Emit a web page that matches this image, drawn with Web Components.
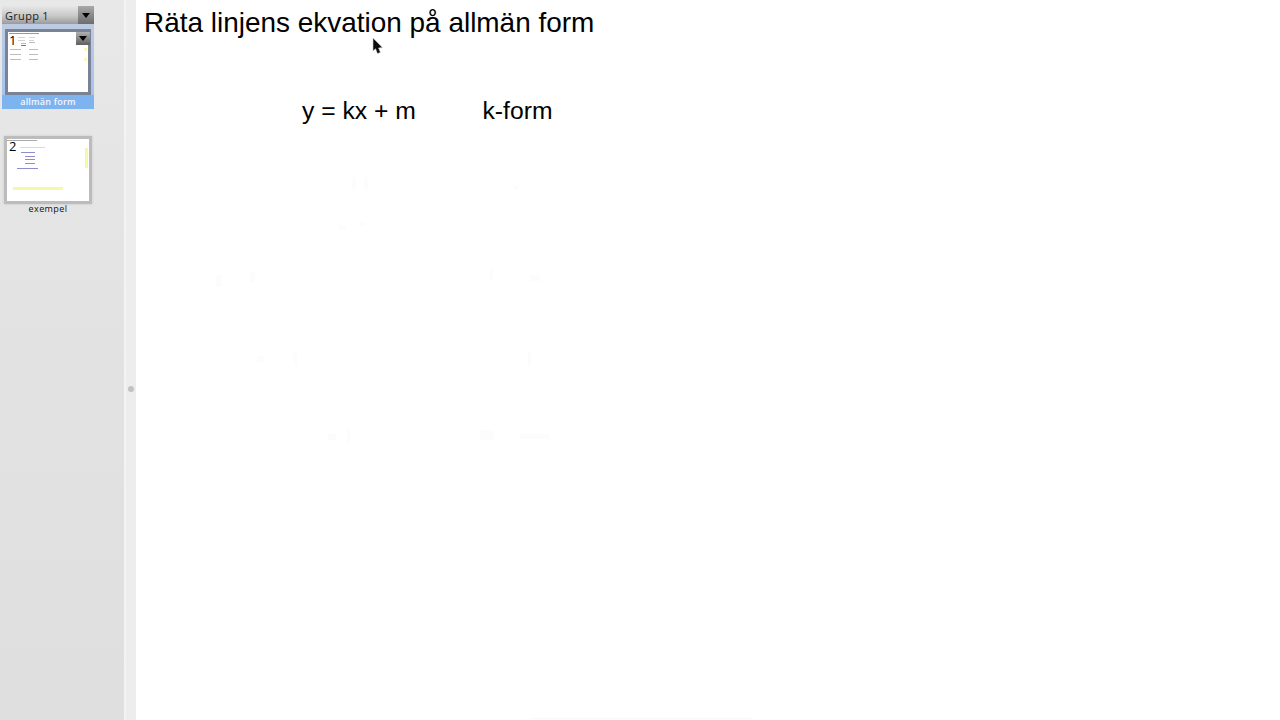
<!DOCTYPE html>
<html>
<head>
<meta charset="utf-8">
<title>Räta linjens ekvation</title>
<style>
html, body { margin: 0; height: 100%; background: #fff; overflow: hidden; }
body { display: flex; height: 720px; font-family: "Liberation Sans", Arial, sans-serif; }
</style>
</head>
<body>
<slide-sorter>
  <group-select label="Grupp 1"></group-select>
  <slide-thumb num="1" name="allmän form" selected>
    <svg slot="art" viewBox="0 0 80 60" width="80" height="60">
      <rect x="1" y="1" width="30" height="1" fill="#999"/>
      <g fill="#d4d4d4">
        <rect x="10" y="5" width="7" height="1"/><rect x="21" y="5" width="6" height="1"/>
        <rect x="10" y="8" width="7" height="1"/><rect x="21" y="8" width="5" height="1"/>
      </g>
      <rect x="21" y="10" width="6" height="1" fill="#bbb"/>
      <rect x="13" y="11" width="5" height="1" fill="#bbb"/>
      <rect x="13" y="13" width="5" height="1" fill="#777"/>
      <g fill="#bdbdbd">
        <rect x="2" y="17" width="11" height="1"/><rect x="21" y="17" width="9" height="1"/>
        <rect x="2" y="22" width="11" height="1"/><rect x="21" y="22" width="9" height="1"/>
        <rect x="2" y="27" width="11" height="1"/><rect x="21" y="27" width="9" height="1"/>
      </g>
      <rect x="76" y="16" width="3" height="3" fill="#f8f8c0"/>
      <rect x="76" y="26" width="3" height="3" fill="#f8f8c0"/>
    </svg>
  </slide-thumb>
  <slide-thumb num="2" name="exempel">
    <svg slot="art" viewBox="0 0 82 62" width="82" height="62">
      <rect x="0" y="1" width="30" height="1" fill="#aaa"/>
      <rect x="13" y="8" width="25" height="1" fill="#d8d8e4"/>
      <g fill="#8e8ecc">
        <rect x="14" y="13" width="14" height="1"/><rect x="18" y="17" width="10" height="1"/>
        <rect x="18" y="20" width="10" height="1"/><rect x="18" y="24" width="10" height="1"/>
        <rect x="10" y="29" width="21" height="1"/>
      </g>
      <g fill="#f7f7a8">
        <rect x="78" y="9" width="3" height="20"/>
        <rect x="6" y="48" width="50" height="3"/>
      </g>
    </svg>
  </slide-thumb>
</slide-sorter>
<pane-divider></pane-divider>
<slide-page>
  <h1 slot="title">Räta linjens ekvation på allmän form</h1>
  <span slot="formula">y = kx + m</span>
  <span slot="form">k-form</span>
</slide-page>
<mouse-pointer></mouse-pointer>

<script>
class SlideSorter extends HTMLElement {
  constructor() {
    super();
    this.attachShadow({mode: 'open'}).innerHTML = `
    <style>
      :host {
        display: flex;
        flex-direction: column;
        box-sizing: border-box;
        width: 124px;
        flex: none;
        height: 720px;
        padding: 6px 0 0 2px;
        background: linear-gradient(#e8e8e8, #e2e2e2 50%, #dfdfdf);
        font-family: "Open Sans", "Liberation Sans", sans-serif;
      }
    </style>
    <slot></slot>`;
  }
}
customElements.define('slide-sorter', SlideSorter);

class GroupSelect extends HTMLElement {
  constructor() {
    super();
    this.attachShadow({mode: 'open'}).innerHTML = `
    <style>
      :host {
        display: flex;
        box-sizing: border-box;
        width: 92px;
        height: 18px;
        align-items: center;
        background: linear-gradient(#e6e6e6, #c8c8c8 55%, #9a9a9a);
        font-size: 11px;
        letter-spacing: 0.3px;
        color: #222;
      }
      span { flex: 1; padding-left: 3px; }
      b {
        display: flex;
        align-items: center;
        justify-content: center;
        width: 16px;
        height: 18px;
        background: linear-gradient(#a8a8a8, #6d6d6d);
      }
      i { border: 4px solid transparent; border-top: 5px solid #000; border-bottom: 0; }
    </style>
    <span></span><b><i></i></b>`;
    this.shadowRoot.querySelector('span').textContent = this.getAttribute('label');
  }
}
customElements.define('group-select', GroupSelect);

class SlideThumb extends HTMLElement {
  constructor() {
    super();
    this.attachShadow({mode: 'open'}).innerHTML = `
    <style>
      :host {
        display: flex;
        flex-direction: column;
        width: 92px;
        height: 85px;
        margin-bottom: 26px;
      }
      :host([selected]) {
        background: linear-gradient(#bccbe2, #a9c4ea 75%);
      }
      .frame {
        position: relative;
        box-sizing: border-box;
        flex: none;
        width: 88px;
        height: 68px;
        margin: 1px 0 0 2px;
        border: 3px solid #bcbcbc;
        background: #fff;
        box-shadow: 0 0 2px #c4c4c4;
      }
      :host([selected]) .frame {
        border-color: #7a8296;
        margin: 5px 0 0 3px;
        width: 86px;
        height: 66px;
        box-shadow: none;
      }
      .art { filter: blur(0.4px); overflow: hidden; height: 100%; }
      .num {
        position: absolute;
        left: 2px;
        top: 0;
        font-size: 13px;
        line-height: 14px;
        color: #000;
      }
      :host([selected]) .num { top: 1px; left: 1px; }
      .arrow {
        position: absolute;
        right: -2px;
        top: 0;
        display: none;
        width: 14px;
        height: 13px;
        align-items: center;
        justify-content: center;
        background: linear-gradient(#b0b0b0, #5f5f5f);
      }
      :host([selected]) .arrow { display: flex; }
      .arrow i { border: 4px solid transparent; border-top: 5px solid #000; border-bottom: 0; }
      ::slotted(svg) { display: block; }
      .name {
        text-align: center;
        font-size: 9px;
        line-height: 14px;
        letter-spacing: 0.4px;
        color: #111;
        margin-top: -2px;
      }
      :host([selected]) .name {
        flex: 1;
        background: #7db4f0;
        color: #f4f8ff;
        margin-top: 0;
        line-height: 13px;
        font-weight: 600;
        letter-spacing: 0.2px;
      }
    </style>
    <div class="frame">
      <div class="art"><slot name="art"></slot></div>
      <span class="num"></span>
      <span class="arrow"><i></i></span>
    </div>
    <div class="name"></div>`;
    this.shadowRoot.querySelector('.num').textContent = this.getAttribute('num');
    this.shadowRoot.querySelector('.name').textContent = this.getAttribute('name');
  }
}
customElements.define('slide-thumb', SlideThumb);

class PaneDivider extends HTMLElement {
  constructor() {
    super();
    this.attachShadow({mode: 'open'}).innerHTML = `
    <style>
      :host {
        display: flex;
        align-items: center;
        justify-content: center;
        box-sizing: border-box;
        flex: none;
        width: 12px;
        height: 720px;
        padding: 57px 0 0 0;
        background: #ededed;
        border-left: 2px solid #f3f3f3;
      }
      i { width: 6px; height: 6px; border-radius: 50%; background: #c2c2c2; }
    </style>
    <i></i>`;
  }
}
customElements.define('pane-divider', PaneDivider);

class SlidePage extends HTMLElement {
  constructor() {
    super();
    this.attachShadow({mode: 'open'}).innerHTML = `
    <style>
      :host {
        display: block;
        position: relative;
        flex: 1;
        box-sizing: border-box;
        padding: 6px 0 0 8px;
        background: #fff;
        color: #000;
      }
      ::slotted(h1) {
        margin: 0;
        font-weight: normal;
        font-size: 27.95px;
        line-height: 33px;
      }
      .row {
        display: flex;
        font-size: 24.7px;
        line-height: 28px;
        margin: 58px 0 0 158px;
      }
      .a { width: 180.5px; }
      /* faded leftovers of the hidden lines, barely visible */
      .ghost { position: absolute; left: 0; top: 0; pointer-events: none; }
    </style>
    <slot name="title"></slot>
    <div class="row">
      <div class="a"><slot name="formula"></slot></div>
      <div><slot name="form"></slot></div>
    </div>
    <svg class="ghost" width="1144" height="720" viewBox="136 0 1144 720">
      <g fill="#fcfcfc">
        <rect x="352" y="177" width="4" height="12"/><rect x="364" y="177" width="4" height="12"/>
        <rect x="513" y="185" width="6" height="5"/>
        <rect x="338" y="225" width="8" height="5"/><rect x="360" y="222" width="6" height="4"/>
        <rect x="216" y="275" width="6" height="12"/><rect x="250" y="272" width="5" height="10"/>
        <rect x="490" y="268" width="3" height="12"/><rect x="530" y="275" width="10" height="6"/>
        <rect x="257" y="356" width="7" height="7"/><rect x="294" y="352" width="3" height="14"/>
        <rect x="528" y="352" width="3" height="14"/>
        <rect x="328" y="434" width="8" height="6"/><rect x="347" y="428" width="3" height="14"/>
        <rect x="480" y="430" width="14" height="10"/><rect x="520" y="434" width="30" height="5"/>
      </g>
      <rect x="530" y="718" width="222" height="1" fill="#f9f9f9"/>
    </svg>`;
  }
}
customElements.define('slide-page', SlidePage);

class MousePointer extends HTMLElement {
  constructor() {
    super();
    this.attachShadow({mode: 'open'}).innerHTML = `
    <style>
      :host { position: absolute; left: 372px; top: 37px; width: 11px; height: 18px; }
      svg { display: block; filter: blur(0.3px); }
    </style>
    <svg width="11" height="18" viewBox="0 0 11 18">
      <path d="M1 1 L1 14 L3.6 11.8 L5.4 16.6 L8.4 15.4 L6.6 11 L10.4 10.6 Z" fill="#0c0c0c" stroke="#ccc" stroke-width="0.6"/>
    </svg>`;
  }
}
customElements.define('mouse-pointer', MousePointer);
</script>
</body>
</html>
